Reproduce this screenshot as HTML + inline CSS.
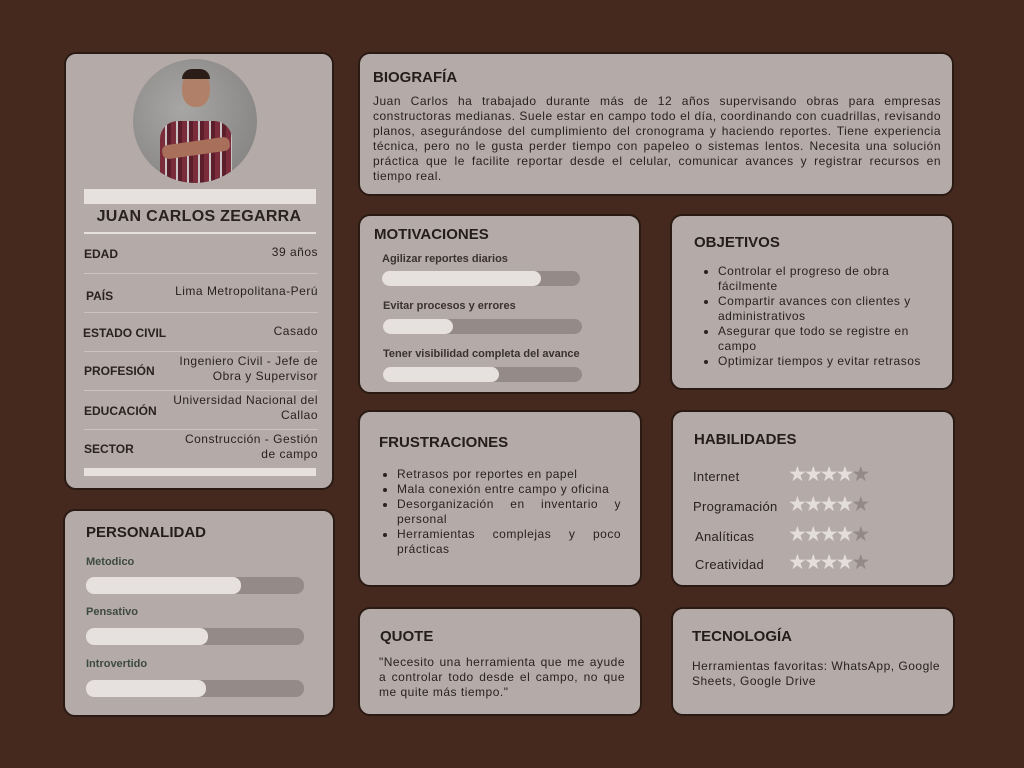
<!DOCTYPE html>
<html><head><meta charset="utf-8"><style>
*{margin:0;padding:0;box-sizing:border-box}
body{width:1024px;height:768px;background:#45291f;font-family:"Liberation Sans",sans-serif;color:#2a2220;position:relative;overflow:hidden}
.c{position:absolute;background:#b4aaa8;border:2px solid #2a1a14;border-radius:12px}
.a{position:absolute}
h2{position:absolute;font-size:15px;font-weight:bold;color:#251d1b}
.bar{position:absolute;height:15px;border-radius:8px;background:#948a88}
.bar i{display:block;height:100%;border-radius:8px;background:#e6e0de}
.lbl{position:absolute;font-size:11px;font-weight:bold;color:#3a3230}
.row{position:absolute;left:18px;right:14px;font-size:12px;border-top:1px solid #cbc3c1}
.k{position:absolute;left:0;font-weight:bold;font-size:12px}
.v{position:absolute;right:0;text-align:right;font-size:12px;line-height:15px;white-space:nowrap}
ul{position:absolute;font-size:12px;line-height:15px;padding-left:18px;letter-spacing:.5px}
.t{letter-spacing:.5px}
.st{position:absolute;font-size:21px;letter-spacing:-3px;color:#e3dedc}
.st b{color:#938988;font-weight:normal}
.sk{position:absolute;font-size:13px;letter-spacing:.3px}
</style></head><body>

<div class="c" style="left:64px;top:52px;width:270px;height:438px">
 <div class="a" style="left:67px;top:5px;width:124px;height:124px;border-radius:50%;background:radial-gradient(circle at 40% 40%,#a8a6a4,#7f7d7c);overflow:hidden">
  <div class="a" style="left:27px;top:62px;width:72px;height:70px;border-radius:18px 18px 0 0;background:repeating-linear-gradient(90deg,#7a2c3a 0 5px,#c9c2c4 5px 7px,#5b1e2a 7px 11px)"></div>
  <div class="a" style="left:49px;top:12px;width:28px;height:36px;border-radius:45%;background:#b08069"></div>
  <div class="a" style="left:49px;top:10px;width:28px;height:10px;border-radius:12px 12px 0 0;background:#2a1d18"></div>
  <div class="a" style="left:29px;top:82px;width:68px;height:14px;border-radius:6px;background:#a8705a;transform:rotate(-8deg)"></div>
 </div>
 <div class="a" style="left:18px;top:135px;width:232px;height:15px;background:#e6e0de"></div>
 <div class="a" style="left:0;width:100%;top:154px;text-align:center;font-size:16px;font-weight:bold;letter-spacing:.3px">JUAN CARLOS ZEGARRA</div>
 <div class="a" style="left:18px;top:178px;width:232px;height:2px;background:#e6e0de"></div>
 <div class="row" style="top:180px;height:40px;border:none"><span class="k" style="top:13px">EDAD</span><span class="v t" style="top:11px">39 años</span></div>
 <div class="row" style="top:219px;height:40px"><span class="k" style="top:15px;left:2px">PAÍS</span><span class="v t" style="top:10px">Lima Metropolitana-Perú</span></div>
 <div class="row" style="top:258px;height:40px"><span class="k" style="top:13px;left:-1px">ESTADO CIVIL</span><span class="v t" style="top:11px">Casado</span></div>
 <div class="row" style="top:297px;height:40px"><span class="k" style="top:12px">PROFESIÓN</span><span class="v t" style="top:2px">Ingeniero Civil - Jefe de<br>Obra y Supervisor</span></div>
 <div class="row" style="top:336px;height:40px"><span class="k" style="top:13px">EDUCACIÓN</span><span class="v t" style="top:2px">Universidad Nacional del<br>Callao</span></div>
 <div class="row" style="top:375px;height:40px"><span class="k" style="top:12px">SECTOR</span><span class="v t" style="top:2px">Construcción - Gestión<br>de campo</span></div>
 <div class="a" style="left:18px;top:414px;width:232px;height:8px;background:#e6e0de"></div>
</div>

<div class="c" style="left:63px;top:509px;width:272px;height:208px">
 <h2 style="left:21px;top:13px">PERSONALIDAD</h2>
 <div class="lbl" style="left:21px;top:45px;color:#3d4a3e">Metodico</div>
 <div class="bar" style="left:21px;top:66px;width:218px;height:17px"><i style="width:155px"></i></div>
 <div class="lbl" style="left:21px;top:95px;color:#3d4a3e">Pensativo</div>
 <div class="bar" style="left:21px;top:117px;width:218px;height:17px"><i style="width:122px"></i></div>
 <div class="lbl" style="left:21px;top:147px;color:#3d4a3e">Introvertido</div>
 <div class="bar" style="left:21px;top:169px;width:218px;height:17px"><i style="width:120px"></i></div>
</div>

<div class="c" style="left:358px;top:52px;width:596px;height:144px">
 <h2 style="left:13px;top:15px">BIOGRAFÍA</h2>
 <div class="a t" style="left:13px;top:40px;width:568px;font-size:12px;line-height:15px;text-align:justify">Juan Carlos ha trabajado durante más de 12 años supervisando obras para empresas constructoras medianas. Suele estar en campo todo el día, coordinando con cuadrillas, revisando planos, asegurándose del cumplimiento del cronograma y haciendo reportes. Tiene experiencia técnica, pero no le gusta perder tiempo con papeleo o sistemas lentos. Necesita una solución práctica que le facilite reportar desde el celular, comunicar avances y registrar recursos en tiempo real.</div>
</div>

<div class="c" style="left:358px;top:214px;width:283px;height:180px">
 <h2 style="left:14px;top:10px">MOTIVACIONES</h2>
 <div class="lbl" style="left:22px;top:37px">Agilizar reportes diarios</div>
 <div class="bar" style="left:22px;top:55px;width:198px"><i style="width:159px"></i></div>
 <div class="lbl" style="left:23px;top:84px">Evitar procesos y errores</div>
 <div class="bar" style="left:23px;top:103px;width:199px"><i style="width:70px"></i></div>
 <div class="lbl" style="left:23px;top:132px">Tener visibilidad completa del avance</div>
 <div class="bar" style="left:23px;top:151px;width:199px"><i style="width:116px"></i></div>
</div>

<div class="c" style="left:670px;top:214px;width:284px;height:176px">
 <h2 style="left:22px;top:18px">OBJETIVOS</h2>
 <ul style="left:28px;top:48px;width:222px"><li>Controlar el progreso de obra fácilmente</li><li>Compartir avances con clientes y administrativos</li><li>Asegurar que todo se registre en campo</li><li>Optimizar tiempos y evitar retrasos</li></ul>
</div>

<div class="c" style="left:358px;top:410px;width:284px;height:177px">
 <h2 style="left:19px;top:22px">FRUSTRACIONES</h2>
 <ul style="left:19px;top:55px;width:242px;text-align:justify"><li>Retrasos por reportes en papel</li><li>Mala conexión entre campo y oficina</li><li>Desorganización en inventario y personal</li><li>Herramientas complejas y poco prácticas</li></ul>
</div>

<div class="c" style="left:671px;top:410px;width:284px;height:177px">
 <h2 style="left:21px;top:19px">HABILIDADES</h2>
 <div class="sk" style="left:20px;top:57px">Internet</div><div class="st" style="left:115px;top:50px">★★★★<b>★</b></div>
 <div class="sk" style="left:20px;top:87px">Programación</div><div class="st" style="left:115px;top:80px">★★★★<b>★</b></div>
 <div class="sk" style="left:22px;top:117px">Analíticas</div><div class="st" style="left:115px;top:110px">★★★★<b>★</b></div>
 <div class="sk" style="left:22px;top:145px">Creatividad</div><div class="st" style="left:115px;top:138px">★★★★<b>★</b></div>
</div>

<div class="c" style="left:358px;top:607px;width:284px;height:109px">
 <h2 style="left:20px;top:19px">QUOTE</h2>
 <div class="a t" style="left:19px;top:46px;width:246px;font-size:12px;line-height:15px;text-align:justify">"Necesito una herramienta que me ayude a controlar todo desde el campo, no que me quite más tiempo."</div>
</div>

<div class="c" style="left:671px;top:607px;width:284px;height:109px">
 <h2 style="left:19px;top:19px">TECNOLOGÍA</h2>
 <div class="a t" style="left:19px;top:50px;width:256px;font-size:12px;line-height:15px">Herramientas favoritas: WhatsApp, Google Sheets, Google Drive</div>
</div>
</body></html>
